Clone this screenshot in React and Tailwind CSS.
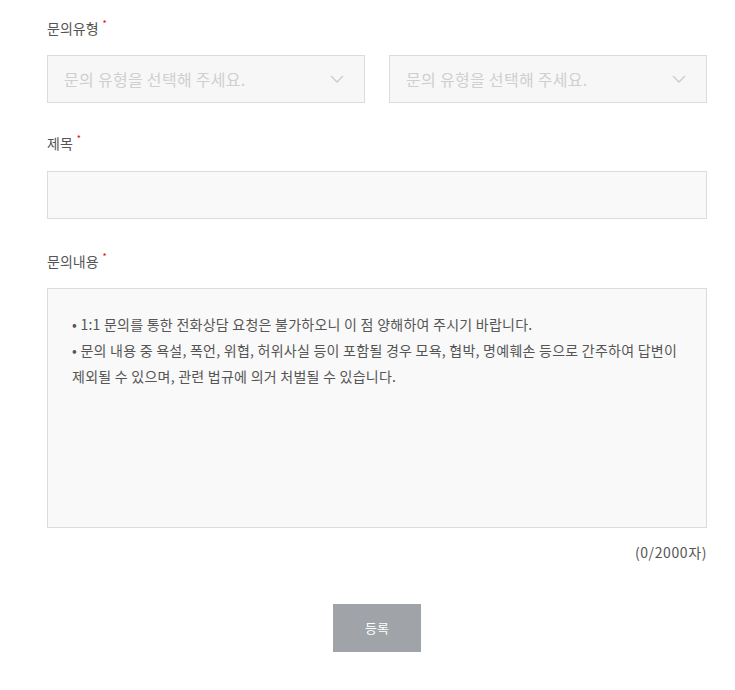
import React from "react";

const font = { fontFamily: '"Noto Sans CJK KR", "Noto Sans", sans-serif' };

function Label({ children }) {
  return (
    <div className="flex items-start text-[14px] leading-[20px] text-[#555]">
      <span>{children}</span>
      <span className="ml-[4px] text-[9px] leading-[12px] text-[#e60012]">*</span>
    </div>
  );
}

function Select() {
  return (
    <div className="flex h-[48px] flex-1 items-center justify-between border border-[#dcdcdc] bg-[#f7f7f7] pl-[16px] pr-[20px]">
      <span className="text-[16px] tracking-[0.3px] text-[#cfcfcf]">문의 유형을 선택해 주세요.</span>
      <svg width="14" height="8" viewBox="0 0 14 8" fill="none">
        <path d="M1 1l6 6 6-6" stroke="#cfcfcf" strokeWidth="1.5" />
      </svg>
    </div>
  );
}

export default function App() {
  return (
    <div className="min-h-[690px] w-[735px] bg-white" style={font}>
      <div className="ml-[47px] w-[660px] pt-[18px]">
        <Label>문의유형</Label>
        <div className="mt-[17px] flex gap-[24px]">
          <Select />
          <Select />
        </div>
        <div className="mt-[30px]">
          <Label>제목</Label>
        </div>
        <div className="mt-[18px] h-[48px] border border-[#dcdcdc] bg-[#f9f9f9]" />
        <div className="mt-[32px]">
          <Label>문의내용</Label>
        </div>
        <div className="mt-[17px] h-[240px] border border-[#dcdcdc] bg-[#f9f9f9] px-[24px] pt-[22px] text-[14px] leading-[26px] tracking-[0.25px] text-[#555]">
          <p>• 1:1 문의를 통한 전화상담 요청은 불가하오니 이 점 양해하여 주시기 바랍니다.</p>
          <p>• 문의 내용 중 욕설, 폭언, 위협, 허위사실 등이 포함될 경우 모욕, 협박, 명예훼손 등으로 간주하여 답변이 제외될 수 있으며, 관련 법규에 의거 처벌될 수 있습니다.</p>
        </div>
        <div className="mt-[14px] text-right text-[14px] leading-[20px] tracking-[0.6px] text-[#555]">(0/2000자)</div>
        <div className="mt-[42px] flex justify-center">
          <button className="h-[48px] w-[88px] bg-[#a0a4a8] text-[13px] text-white">등록</button>
        </div>
      </div>
    </div>
  );
}
